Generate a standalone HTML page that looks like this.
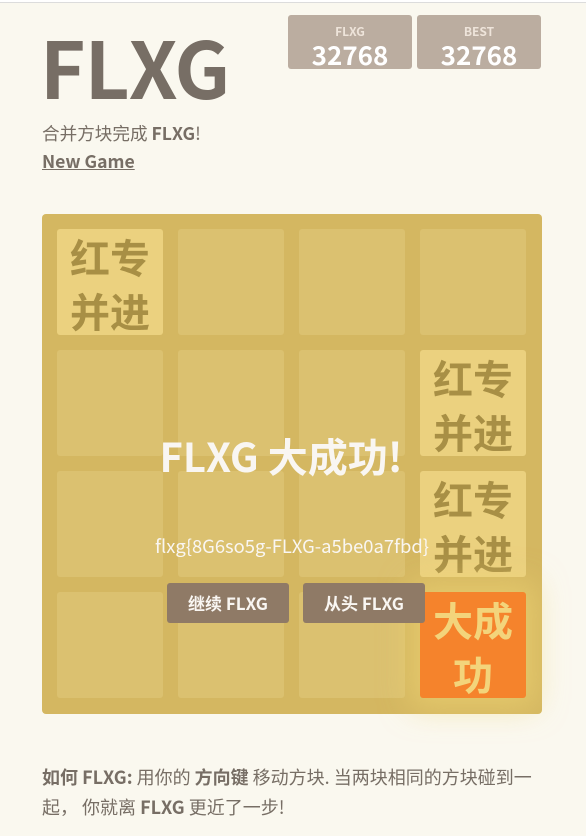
<!DOCTYPE html>
<html><head><meta charset="utf-8"><style>
*{margin:0;padding:0;box-sizing:border-box}
body{width:586px;height:836px;background:#faf8ef;font-family:"Noto Sans CJK SC","Liberation Sans",sans-serif;color:#776e65;position:relative;overflow:hidden}
.topline{position:absolute;left:0;top:0;width:586px;height:3px;background:#fff;border-bottom:1px solid #dcdcdc}
h1{position:absolute;left:40px;top:16px;font-size:78px;font-weight:bold;letter-spacing:-1px;line-height:100px;color:#776e65}
.sc{position:absolute;top:15px;width:124px;height:54px;background:#bbada0;border-radius:3px;text-align:center;color:#fff}
.sc .l{font-size:12px;font-weight:bold;color:#eee4da;margin-top:9px;line-height:16px}
.sc .v{font-size:26px;font-weight:bold;line-height:30px}
.intro{position:absolute;left:42px;top:121px;font-size:17.6px;line-height:26px}
.ng{position:absolute;left:42px;top:149px;font-size:17.6px;font-weight:bold;text-decoration:underline;line-height:26px}
.board{position:absolute;left:42px;top:214px;width:500px;height:500px;background:#d4b761;border-radius:4px}
.t{position:absolute;width:106px;height:106px;background:#dbc170;border-radius:3px}
.r{background:#ebd17f;color:#a88f45;font-weight:bold;font-size:40px;line-height:54px;text-align:center;padding-top:0}
.o{background:#f5832c;color:#f3d47b;font-weight:bold;font-size:40px;line-height:54px;text-align:center;box-shadow:0 0 30px 10px rgba(243,215,116,.55)}
.msg{position:absolute;left:42px;top:214px;width:500px;height:500px;text-align:center}
.msg .h{position:absolute;left:-11px;width:500px;top:214px;font-size:40px;font-weight:bold;color:#f9f6f2;line-height:54px}
.msg .f{position:absolute;left:0;width:500px;top:318px;font-size:18.4px;color:#f9f6f2;line-height:28px}
.btn{position:absolute;top:369px;width:122px;height:40px;background:#8f7a66;color:#f9f6f2;border-radius:3px;font-size:17px;font-weight:bold;line-height:40px}
.how{position:absolute;left:42px;top:762px;font-size:18px;line-height:30px;white-space:nowrap}
</style></head><body>
<div class="topline"></div>
<h1>FLXG</h1>
<div class="sc" style="left:288px"><div class="l">FLXG</div><div class="v">32768</div></div>
<div class="sc" style="left:417px"><div class="l">BEST</div><div class="v">32768</div></div>
<div class="intro">合并方块完成 <b>FLXG</b>!</div>
<div class="ng">New Game</div>
<div class="board">
<div class="t r" style="left:15px;top:15px">红专<br>并进</div>
<div class="t" style="left:136px;top:15px"></div>
<div class="t" style="left:257px;top:15px"></div>
<div class="t" style="left:378px;top:15px"></div>
<div class="t" style="left:15px;top:136px"></div>
<div class="t" style="left:136px;top:136px"></div>
<div class="t" style="left:257px;top:136px"></div>
<div class="t r" style="left:378px;top:136px">红专<br>并进</div>
<div class="t" style="left:15px;top:257px"></div>
<div class="t" style="left:136px;top:257px"></div>
<div class="t" style="left:257px;top:257px"></div>
<div class="t r" style="left:378px;top:257px">红专<br>并进</div>
<div class="t" style="left:15px;top:378px"></div>
<div class="t" style="left:136px;top:378px"></div>
<div class="t" style="left:257px;top:378px"></div>
<div class="t o" style="left:378px;top:378px">大成<br>功</div>
</div>
<div class="msg">
<div class="h">FLXG 大成功!</div>
<div class="f">flxg{8G6so5g-FLXG-a5be0a7fbd}</div>
<div class="btn" style="left:125px">继续 FLXG</div>
<div class="btn" style="left:261px">从头 FLXG</div>
</div>
<div class="how"><b>如何 FLXG:</b> 用你的 <b>方向键</b> 移动方块. 当两块相同的方块碰到一<br>起， 你就离 <b>FLXG</b> 更近了一步!</div>
</body></html>
